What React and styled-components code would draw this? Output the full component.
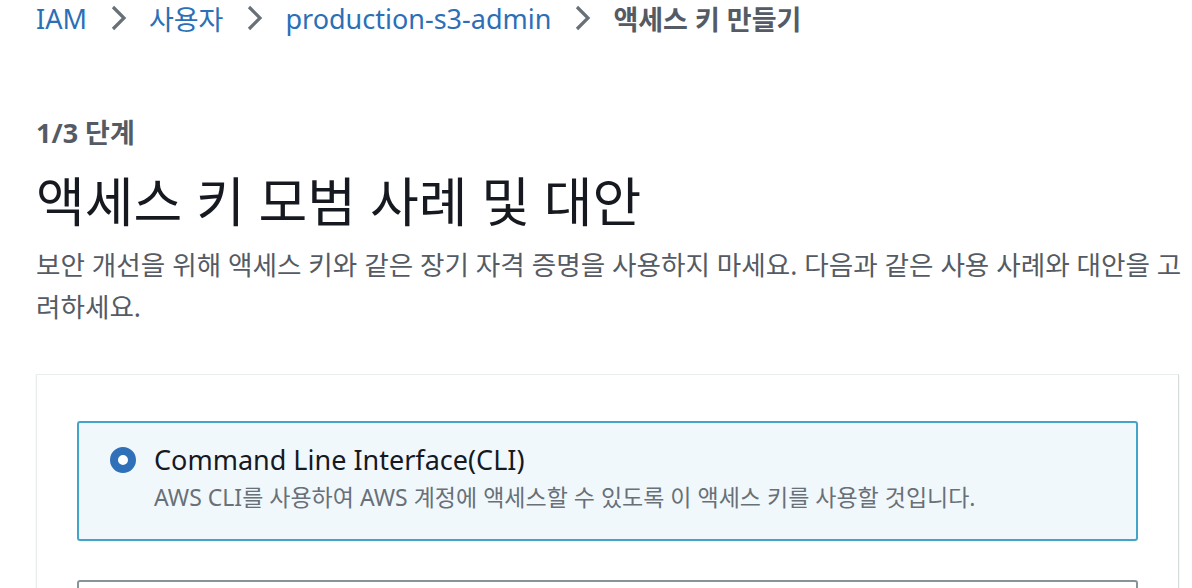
import styled, { createGlobalStyle } from "styled-components";

const GlobalStyle = createGlobalStyle`
  body {
    margin: 0;
    background: #ffffff;
    font-family: "Noto Sans", "Noto Sans CJK KR", sans-serif;
    color: #16191f;
  }
`;

const Page = styled.div`
  padding: 0 4px 0 36px;
  height: 588px;
  overflow: hidden;
`;

const Breadcrumbs = styled.nav`
  display: flex;
  align-items: center;
  gap: 20px;
  height: 36px;
  font-size: 27px;
`;

const Crumb = styled.span`
  color: ${(p) => (p.$current ? "#545b64" : "#2b6fb6")};
  font-weight: ${(p) => (p.$current ? 600 : 400)};
  white-space: nowrap;
`;

const Chevron = () => (
  <svg width="22" height="28" viewBox="0 0 22 28">
    <path d="M6 3 L17 14 L6 25" fill="none" stroke="#687078" strokeWidth="3.2" />
  </svg>
);

const Step = styled.div`
  margin-top: 82px;
  font-size: 27px;
  font-weight: 700;
  color: #545b64;
  line-height: 30px;
`;

const Title = styled.h1`
  margin: 22px 0 0;
  font-size: 53px;
  font-weight: 400;
  line-height: 64px;
  color: #16191f;
`;

const Description = styled.p`
  margin: 10px 0 0;
  font-size: 26.6px;
  line-height: 42px;
  color: #545b64;
`;

const Card = styled.section`
  margin: 46px 9px 0 0;
  border: 1px solid #eaeded;
  border-right-color: #d5dbdb;
  box-shadow: 0 1px 1px rgba(0, 28, 36, 0.15);
  padding: 46px 40px 0 40px;
  display: flex;
  flex-direction: column;
  gap: 39px;
`;

const Tile = styled.label`
  display: flex;
  gap: 18px;
  border: 2px solid ${(p) => (p.$selected ? "#44a3c9" : "#879596")};
  background: ${(p) => (p.$selected ? "#f1f8fc" : "#ffffff")};
  border-radius: 3px;
  padding: 22px 30px 27px 31px;
  min-height: ${(p) => (p.$selected ? "120px" : "60px")};
  box-sizing: border-box;
`;

const Radio = styled.span`
  flex: none;
  width: 26px;
  height: 26px;
  margin-top: 2px;
  border-radius: 50%;
  box-sizing: border-box;
  border: ${(p) => (p.$checked ? "8.5px solid #3070b8" : "2px solid #879596")};
  background: #ffffff;
`;

const TileText = styled.div`
  display: flex;
  flex-direction: column;
`;

const TileTitle = styled.div`
  font-size: 27px;
  line-height: 30px;
  color: #16191f;
`;

const TileSub = styled.div`
  margin-top: 7px;
  font-size: 23px;
  line-height: 30px;
  color: #687078;
`;

export default function App() {
  return (
    <Page>
      <GlobalStyle />
      <Breadcrumbs>
        <Crumb>IAM</Crumb>
        <Chevron />
        <Crumb>사용자</Crumb>
        <Chevron />
        <Crumb>production-s3-admin</Crumb>
        <Chevron />
        <Crumb $current>액세스 키 만들기</Crumb>
      </Breadcrumbs>
      <Step>1/3 단계</Step>
      <Title>액세스 키 모범 사례 및 대안</Title>
      <Description>
        보안 개선을 위해 액세스 키와 같은 장기 자격 증명을 사용하지 마세요. 다음과 같은 사용 사례와 대안을 고려하세요.
      </Description>
      <Card>
        <Tile $selected>
          <Radio $checked />
          <TileText>
            <TileTitle>Command Line Interface(CLI)</TileTitle>
            <TileSub>AWS CLI를 사용하여 AWS 계정에 액세스할 수 있도록 이 액세스 키를 사용할 것입니다.</TileSub>
          </TileText>
        </Tile>
        <Tile />
      </Card>
    </Page>
  );
}
